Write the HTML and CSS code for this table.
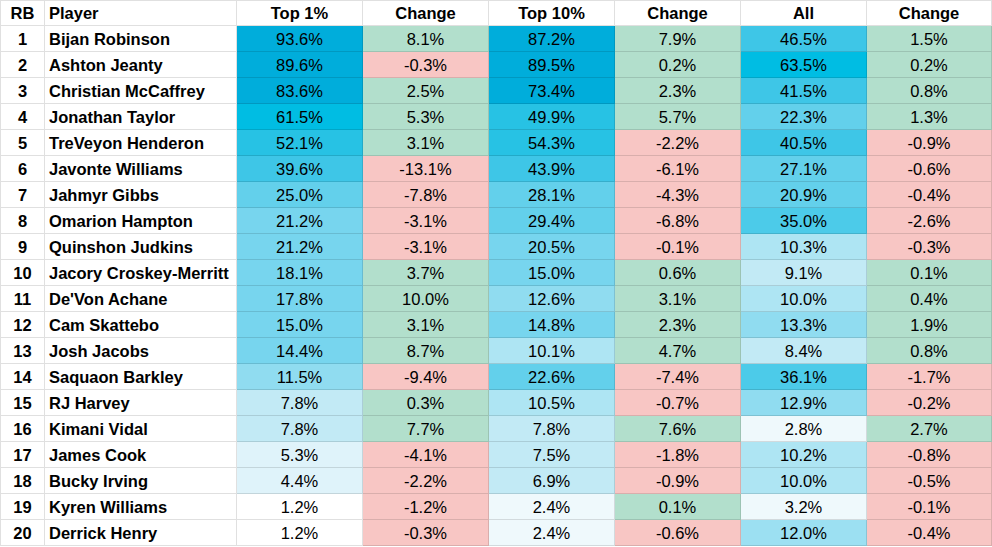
FILE: index.html
```html
<!DOCTYPE html>
<html>
<head>
<meta charset="utf-8">
<link rel="stylesheet" href="styles.css">
</head>
<body>
<div class="sheet">
  <div class="row head">
    <div class="c num">RB</div><div class="c name">Player</div><div class="c">Top 1%</div><div class="c">Change</div><div class="c">Top 10%</div><div class="c">Change</div><div class="c">All</div><div class="c">Change</div>
  </div>
  <div class="row"><div class="c num">1</div><div class="c name">Bijan Robinson</div><div class="c b0">93.6%</div><div class="c g">8.1%</div><div class="c b0">87.2%</div><div class="c g">7.9%</div><div class="c b3">46.5%</div><div class="c g">1.5%</div></div>
  <div class="row"><div class="c num">2</div><div class="c name">Ashton Jeanty</div><div class="c b0">89.6%</div><div class="c r">-0.3%</div><div class="c b0">89.5%</div><div class="c g">0.2%</div><div class="c b1">63.5%</div><div class="c g">0.2%</div></div>
  <div class="row"><div class="c num">3</div><div class="c name">Christian McCaffrey</div><div class="c b0">83.6%</div><div class="c g">2.5%</div><div class="c b0">73.4%</div><div class="c g">2.3%</div><div class="c b3">41.5%</div><div class="c g">0.8%</div></div>
  <div class="row"><div class="c num">4</div><div class="c name">Jonathan Taylor</div><div class="c b1">61.5%</div><div class="c g">5.3%</div><div class="c b2">49.9%</div><div class="c g">5.7%</div><div class="c b5">22.3%</div><div class="c g">1.3%</div></div>
  <div class="row"><div class="c num">5</div><div class="c name">TreVeyon Henderon</div><div class="c b2">52.1%</div><div class="c g">3.1%</div><div class="c b2">54.3%</div><div class="c r">-2.2%</div><div class="c b3">40.5%</div><div class="c r">-0.9%</div></div>
  <div class="row"><div class="c num">6</div><div class="c name">Javonte Williams</div><div class="c b3">39.6%</div><div class="c r">-13.1%</div><div class="c b3">43.9%</div><div class="c r">-6.1%</div><div class="c b5">27.1%</div><div class="c r">-0.6%</div></div>
  <div class="row"><div class="c num">7</div><div class="c name">Jahmyr Gibbs</div><div class="c b5">25.0%</div><div class="c r">-7.8%</div><div class="c b5">28.1%</div><div class="c r">-4.3%</div><div class="c b5">20.9%</div><div class="c r">-0.4%</div></div>
  <div class="row"><div class="c num">8</div><div class="c name">Omarion Hampton</div><div class="c b6">21.2%</div><div class="c r">-3.1%</div><div class="c b5">29.4%</div><div class="c r">-6.8%</div><div class="c b4">35.0%</div><div class="c r">-2.6%</div></div>
  <div class="row"><div class="c num">9</div><div class="c name">Quinshon Judkins</div><div class="c b6">21.2%</div><div class="c r">-3.1%</div><div class="c b6">20.5%</div><div class="c r">-0.1%</div><div class="c b8">10.3%</div><div class="c r">-0.3%</div></div>
  <div class="row"><div class="c num">10</div><div class="c name">Jacory Croskey-Merritt</div><div class="c b6">18.1%</div><div class="c g">3.7%</div><div class="c b6">15.0%</div><div class="c g">0.6%</div><div class="c b9">9.1%</div><div class="c g">0.1%</div></div>
  <div class="row"><div class="c num">11</div><div class="c name">De'Von Achane</div><div class="c b6">17.8%</div><div class="c g">10.0%</div><div class="c b7">12.6%</div><div class="c g">3.1%</div><div class="c b8">10.0%</div><div class="c g">0.4%</div></div>
  <div class="row"><div class="c num">12</div><div class="c name">Cam Skattebo</div><div class="c b6">15.0%</div><div class="c g">3.1%</div><div class="c b6">14.8%</div><div class="c g">2.3%</div><div class="c b7">13.3%</div><div class="c g">1.9%</div></div>
  <div class="row"><div class="c num">13</div><div class="c name">Josh Jacobs</div><div class="c b6">14.4%</div><div class="c g">8.7%</div><div class="c b8">10.1%</div><div class="c g">4.7%</div><div class="c b9">8.4%</div><div class="c g">0.8%</div></div>
  <div class="row"><div class="c num">14</div><div class="c name">Saquaon Barkley</div><div class="c b7">11.5%</div><div class="c r">-9.4%</div><div class="c b5">22.6%</div><div class="c r">-7.4%</div><div class="c b4">36.1%</div><div class="c r">-1.7%</div></div>
  <div class="row"><div class="c num">15</div><div class="c name">RJ Harvey</div><div class="c b9">7.8%</div><div class="c g">0.3%</div><div class="c b8">10.5%</div><div class="c r">-0.7%</div><div class="c b7">12.9%</div><div class="c r">-0.2%</div></div>
  <div class="row"><div class="c num">16</div><div class="c name">Kimani Vidal</div><div class="c b9">7.8%</div><div class="c g">7.7%</div><div class="c b9">7.8%</div><div class="c g">7.6%</div><div class="c b11">2.8%</div><div class="c g">2.7%</div></div>
  <div class="row"><div class="c num">17</div><div class="c name">James Cook</div><div class="c b10">5.3%</div><div class="c r">-4.1%</div><div class="c b9">7.5%</div><div class="c r">-1.8%</div><div class="c b8">10.2%</div><div class="c r">-0.8%</div></div>
  <div class="row"><div class="c num">18</div><div class="c name">Bucky Irving</div><div class="c b10">4.4%</div><div class="c r">-2.2%</div><div class="c b9">6.9%</div><div class="c r">-0.9%</div><div class="c b8">10.0%</div><div class="c r">-0.5%</div></div>
  <div class="row"><div class="c num">19</div><div class="c name">Kyren Williams</div><div class="c">1.2%</div><div class="c r">-1.2%</div><div class="c b11">2.4%</div><div class="c g">0.1%</div><div class="c b11">3.2%</div><div class="c r">-0.1%</div></div>
  <div class="row"><div class="c num">20</div><div class="c name">Derrick Henry</div><div class="c">1.2%</div><div class="c r">-0.3%</div><div class="c b11">2.4%</div><div class="c r">-0.6%</div><div class="c b7b">12.0%</div><div class="c r">-0.4%</div></div>
</div>
</body>
</html>
```

FILE: styles.css
```css
html, body {
  margin: 0;
  padding: 0;
  background: #ffffff;
}

body {
  font-family: "Liberation Sans", Arial, sans-serif;
  font-size: 16.5px;
  color: #000000;
}

.sheet {
  display: grid;
  grid-template-columns: 44px 192px repeat(5, 126px) 125px;
  grid-template-rows: 25px;
  grid-auto-rows: 26px;
  border-top: 1px solid #e0e0e0;
  border-left: 1px solid #e0e0e0;
  width: 992px;
  box-sizing: border-box;
}

.row {
  display: contents;
}

.c {
  box-sizing: border-box;
  border-right: 1px solid rgba(0, 0, 0, 0.12);
  border-bottom: 1px solid rgba(0, 0, 0, 0.12);
  display: flex;
  align-items: flex-end;
  justify-content: center;
  line-height: 18px;
  padding-bottom: 3px;
  white-space: nowrap;
  overflow: hidden;
}

.head .c,
.num,
.name {
  font-weight: bold;
}

.name {
  justify-content: flex-start;
  padding-left: 4px;
}

.g { background: #b2dfcc; }
.r { background: #f8c6c4; }

.b0 { background: #00addb; }
.b1 { background: #00bde3; }
.b2 { background: #27c2e4; }
.b3 { background: #3ec6e7; }
.b4 { background: #4ccbe9; }
.b5 { background: #63d0eb; }
.b6 { background: #77d5ee; }
.b7 { background: #90dcf0; }
.b7b { background: #9ce0f2; }
.b8 { background: #aee5f3; }
.b9 { background: #c2eaf5; }
.b10 { background: #dff3fa; }
.b11 { background: #eff9fc; }
```
